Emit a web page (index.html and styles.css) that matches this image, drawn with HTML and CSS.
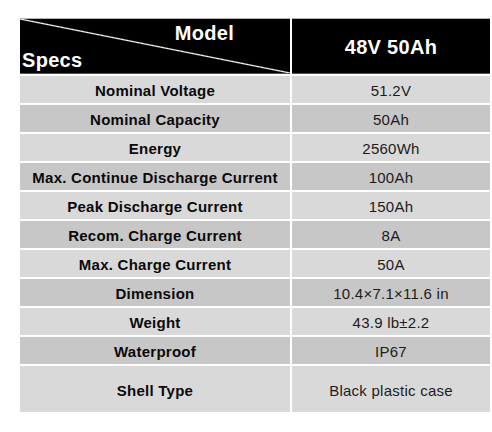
FILE: index.html
```html
<!DOCTYPE html>
<html lang="en">
<head>
    <meta charset="UTF-8">
    <meta name="viewport" content="width=device-width, initial-scale=1.0">
    <title>48V 50Ah Specs</title>
    <link rel="stylesheet" href="styles.css">
</head>
<body>
    <div class="spec-table">
        <div class="head head-corner">
            <span class="model">Model</span>
            <span class="specs">Specs</span>
        </div>
        <div class="head head-model">48V 50Ah</div>

        <div class="key light">Nominal Voltage</div>
        <div class="val light">51.2V</div>

        <div class="key dark">Nominal Capacity</div>
        <div class="val dark">50Ah</div>

        <div class="key light">Energy</div>
        <div class="val light">2560Wh</div>

        <div class="key dark">Max. Continue Discharge Current</div>
        <div class="val dark">100Ah</div>

        <div class="key light">Peak Discharge Current</div>
        <div class="val light">150Ah</div>

        <div class="key dark">Recom. Charge Current</div>
        <div class="val dark">8A</div>

        <div class="key light">Max. Charge Current</div>
        <div class="val light">50A</div>

        <div class="key dark">Dimension</div>
        <div class="val dark">10.4×7.1×11.6 in</div>

        <div class="key light">Weight</div>
        <div class="val light">43.9 lb±2.2</div>

        <div class="key dark">Waterproof</div>
        <div class="val dark">IP67</div>

        <div class="key light tall">Shell Type</div>
        <div class="val light tall">Black plastic case</div>
    </div>
</body>
</html>
```

FILE: styles.css
```css
body { margin: 0; background: #fff; font-family: 'Liberation Sans', Arial, sans-serif; }

.spec-table {
    display: grid;
    grid-template-columns: 270px 198px;
    gap: 2px;
    margin: 18px 0 0 20px;
    width: 470px;
}

/* 表头 */
.head {
    background: #000;
    color: #fff;
    font-weight: bold;
    font-size: 20px;
    letter-spacing: 0.3px;
    height: 56px;
    box-sizing: border-box;
    border-top: 1px solid #b5b5b5;
    border-bottom: 1px solid #555;
}
.head-corner {
    display: flex;
    flex-direction: column;
    justify-content: space-between;
    padding: 3px 0 2px 2px;
    background: linear-gradient(to top right, #000 calc(50% - 1.2px), #fff 50%, #000 calc(50% + 1.2px));
}
.head-corner span { line-height: 22px; }
.model { align-self: flex-end; margin-right: 56px; }
.specs { align-self: flex-start; }
.head-model {
    display: flex;
    align-items: center;
    justify-content: center;
    padding-top: 3px;
}

/* 数据行 */
.key, .val {
    display: flex;
    align-items: center;
    justify-content: center;
    height: 27px;
    box-sizing: border-box;
    padding-top: 2px;
    font-size: 15px;
    letter-spacing: 0.25px;
    white-space: nowrap;
}
.key { font-weight: bold; color: #0a0a0a; }
.val { color: #1c1c1c; }
.light { background: #d9d9d9; }
.dark { background: #c7c7c7; }
.tall { height: 46px; }
```
